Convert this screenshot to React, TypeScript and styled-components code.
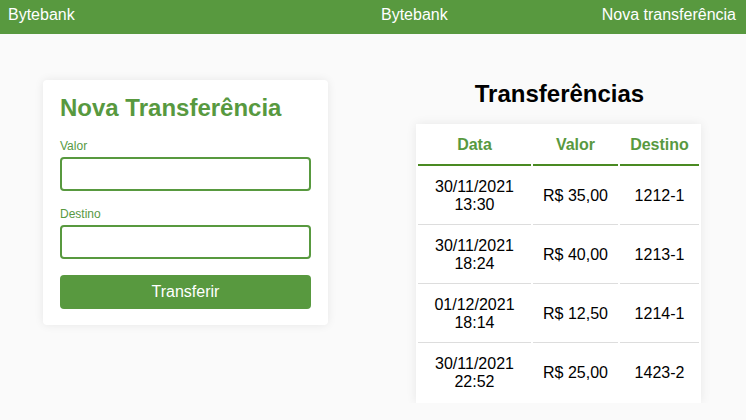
import React from 'react';
import styled, {createGlobalStyle} from "styled-components";

const green = '#58993f';

const GlobalStyle = createGlobalStyle`
    body {
        margin: 0;
        background-color: #fafafa;
        font-family: "Liberation Sans", Arial, sans-serif;
    }
`

type Transfer = { dia: string; hora: string; valor: string; destino: string };

const transfers: Transfer[] = [
    {dia: '30/11/2021', hora: '13:30', valor: 'R$ 35,00', destino: '1212-1'},
    {dia: '30/11/2021', hora: '18:24', valor: 'R$ 40,00', destino: '1213-1'},
    {dia: '01/12/2021', hora: '18:14', valor: 'R$ 12,50', destino: '1214-1'},
    {dia: '30/11/2021', hora: '22:52', valor: 'R$ 25,00', destino: '1423-2'},
];

const App = () => {
    return (
        <>
            <GlobalStyle/>
            <Header>
                <Logo>Bytebank</Logo>
                <NavLinks>
                    <NavLink>Bytebank</NavLink>
                    <NavLink>Nova transferência</NavLink>
                </NavLinks>
            </Header>
            <Main>
                <Column>
                    <Card>
                        <CardTitle>Nova Transferência</CardTitle>
                        <Label $top='17px'>Valor</Label>
                        <Input type="text"/>
                        <Label $top='16px'>Destino</Label>
                        <Input type="text"/>
                        <Button>Transferir</Button>
                    </Card>
                </Column>
                <Column>
                    <ListTitle>Transferências</ListTitle>
                    <Table>
                        <thead>
                        <tr>
                            <Th $width='93px'>Data</Th>
                            <Th $width='65px'>Valor</Th>
                            <Th $width='59px'>Destino</Th>
                        </tr>
                        </thead>
                        <tbody>
                        {transfers.map((t, i) => (
                            <tr key={i}>
                                <Td>{t.dia}<br/>{t.hora}</Td>
                                <Td>{t.valor}</Td>
                                <Td>{t.destino}</Td>
                            </tr>
                        ))}
                        </tbody>
                    </Table>
                </Column>
            </Main>
        </>
    );
};

export default App;

const Header = styled.header`
    display: flex;
    justify-content: space-between;
    align-items: flex-start;
    box-sizing: border-box;
    height: 34px;
    padding: 6px 10px 0 8px;
    background-color: ${green};
    color: #ffffff;
    font-size: 16px;
`

const Logo = styled.span`
    line-height: normal;
`

const NavLinks = styled.nav`
    display: flex;
    gap: 154px;
`

const NavLink = styled.a`
    color: #ffffff;
    cursor: pointer;
`

const Main = styled.main`
    display: grid;
    grid-template-columns: 1fr 1fr;
    padding-top: 46px;
`

const Column = styled.section`
    display: flex;
    flex-direction: column;
    align-items: center;
`

const Card = styled.div`
    display: flex;
    flex-direction: column;
    box-sizing: border-box;
    width: 285px;
    padding: 14px 17px 16px;
    margin-left: -2px;
    background-color: #ffffff;
    border-radius: 4px;
    box-shadow: 0 0 10px rgba(0, 0, 0, 0.08);
`

const CardTitle = styled.h2`
    margin: 0;
    font-size: 24px;
    font-weight: 700;
    color: ${green};
`

const Label = styled.label<{ $top: string }>`
    margin: ${props => props.$top} 0 4px;
    font-size: 12px;
    color: ${green};
`

const Input = styled.input`
    box-sizing: border-box;
    width: 100%;
    height: 34px;
    border: 2px solid ${green};
    border-radius: 4px;
    background-color: #ffffff;
    outline: none;
`

const Button = styled.button`
    margin-top: 16px;
    height: 34px;
    border: none;
    border-radius: 4px;
    background-color: ${green};
    color: #ffffff;
    font-family: inherit;
    font-size: 16px;
    cursor: pointer;
`

const ListTitle = styled.h2`
    margin: 0 0 16px;
    font-size: 24px;
    font-weight: 700;
    color: #000000;
`

const Table = styled.table`
    width: 285px;
    margin-left: -2px;
    border-spacing: 2px;
    background-color: #ffffff;
    box-shadow: 0 0 10px rgba(0, 0, 0, 0.08);
    font-size: 16px;

    tbody tr:last-child td {
        border-bottom: none;
    }
`

const Th = styled.th<{ $width: string }>`
    width: ${props => props.$width};
    padding: 10px;
    border-bottom: 2px solid #4a8a22;
    color: ${green};
    font-weight: 700;
`

const Td = styled.td`
    padding: 10px;
    border-bottom: 1px solid #dddddd;
    text-align: center;
    white-space: nowrap;
    color: #000000;
`
